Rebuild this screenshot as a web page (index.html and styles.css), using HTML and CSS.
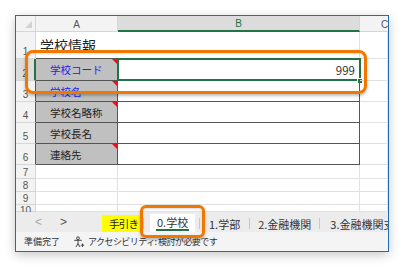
FILE: index.html
```html
<!DOCTYPE html>
<html lang="ja">
<head>
<meta charset="utf-8">
<link rel="stylesheet" href="styles.css">
</head>
<body>
<div class="page">
  <div class="frame">
    <div class="sheet">
      <div class="corner"><span class="corner-tri"></span></div>
      <div class="colhead">A</div>
      <div class="colhead sel">B</div>
      <div class="colhead colc">C</div>

      <div class="rowhead">1</div>
      <div class="cell a title edge-b">学校情報</div>
      <div class="cell edge-b"></div>
      <div class="cell"></div>

      <div class="rowhead rsel">2</div>
      <div class="cell a label blue"><span class="cm"></span>学校コード</div>
      <div class="cell b num"><span class="selbox"></span><span class="handle"></span>999</div>
      <div class="cell"></div>

      <div class="rowhead dark">3</div>
      <div class="cell a label blue"><span class="cm"></span>学校名</div>
      <div class="cell b"></div>
      <div class="cell"></div>

      <div class="rowhead dark">4</div>
      <div class="cell a label"><span class="cm"></span>学校名略称</div>
      <div class="cell b"></div>
      <div class="cell"></div>

      <div class="rowhead dark">5</div>
      <div class="cell a label">学校長名</div>
      <div class="cell b"></div>
      <div class="cell"></div>

      <div class="rowhead dark">6</div>
      <div class="cell a label"><span class="cm"></span>連絡先</div>
      <div class="cell b"></div>
      <div class="cell"></div>

      <div class="rowhead small">7</div>
      <div class="cell"></div>
      <div class="cell"></div>
      <div class="cell"></div>

      <div class="rowhead small">8</div>
      <div class="cell"></div>
      <div class="cell"></div>
      <div class="cell"></div>

      <div class="rowhead small">9</div>
      <div class="cell"></div>
      <div class="cell"></div>
      <div class="cell"></div>

      <div class="rowhead small cut">10</div>
      <div class="cell"></div>
      <div class="cell"></div>
      <div class="cell"></div>
    </div>

    <div class="tabbar">
      <div class="nav"><span class="arrow dim">&lt;</span><span class="arrow">&gt;</span></div>
      <div class="tab guide">手引き</div>
      <div class="sep first"></div>
      <div class="tab active"><span class="tab-text">0.学校</span></div>
      <div class="sep"></div>
      <div class="tab">1.学部</div>
      <div class="sep"></div>
      <div class="tab t2">2.金融機関</div>
      <div class="sep"></div>
      <div class="tab t3">3.金融機関支</div>
    </div>

    <div class="status">
      <span class="ready">準備完了</span>
      <svg class="acc" width="12" height="12" viewBox="0 0 12 12">
        <circle cx="5" cy="2.2" r="1.4" fill="none" stroke="#444" stroke-width="1"/>
        <path d="M1.2 4.3 L8.8 4.3 M5 4.3 L5 7.5 M5 7.5 L3 11 M5 7.5 L7 11" fill="none" stroke="#444" stroke-width="1"/>
        <path d="M9.5 7.5 L9.5 11 M7.8 9.2 L11.2 9.2" fill="none" stroke="#444" stroke-width="1"/>
      </svg>
      <span class="acc-text">アクセシビリティ: 検討が必要です</span>
    </div>
  </div>

  <div class="hl hl-row"></div>
  <div class="hl hl-tab"></div>
</div>
</body>
</html>
```

FILE: styles.css
```css
* { box-sizing: border-box; }

html, body {
  margin: 0;
  padding: 0;
  background: #ffffff;
}

body {
  font-family: "Noto Sans CJK JP", "Liberation Sans", sans-serif;
  color: #222;
}

.page {
  position: relative;
  width: 404px;
  height: 268px;
  padding: 15px 0 0 15px;
}

.frame {
  width: 374px;
  height: 237px;
  border: 1px solid #1f6cb6;
  box-shadow: 0 3px 10px rgba(0, 0, 0, 0.22);
  display: flex;
  flex-direction: column;
  overflow: hidden;
  background: #fff;
}

.sheet {
  display: grid;
  grid-template-columns: 20px 82px 242px 28px;
  grid-template-rows: 16px 27px 22px 21px 21px 21px 21px 14px 13px 13px 7px;
  flex: none;
}

.corner {
  position: relative;
  background: #f3f3f3;
  border-right: 1px solid #d6d6d6;
  border-bottom: 1px solid #d6d6d6;
}

.corner-tri {
  position: absolute;
  right: 3px;
  bottom: 3px;
  width: 0;
  height: 0;
  border-left: 7px solid transparent;
  border-bottom: 7px solid #d2d2d2;
}

.colhead {
  background: #f3f3f3;
  border-right: 1px solid #d6d6d6;
  border-bottom: 1px solid #d6d6d6;
  font-family: "Liberation Sans", sans-serif;
  font-size: 10px;
  color: #555;
  display: flex;
  align-items: flex-end;
  justify-content: center;
  padding-bottom: 1px;
}

.colhead.sel {
  background: #dcdcdc;
  color: #217346;
  border-bottom: 2px solid #217346;
}

.colhead.colc {
  justify-content: flex-start;
  padding-left: 21px;
  border-right: none;
}

.rowhead {
  background: #f3f3f3;
  border-right: 1px solid #d6d6d6;
  border-bottom: 1px solid #d6d6d6;
  font-family: "Liberation Sans", sans-serif;
  font-size: 10px;
  color: #555;
  display: flex;
  align-items: flex-end;
  justify-content: center;
  padding-bottom: 1px;
  line-height: 11px;
}

.rowhead.dark { border-right: 1px solid #555; }

.rowhead.rsel {
  background: #dcdcdc;
  color: #217346;
  border-right: 2px solid #217346;
}

.rowhead.small { padding-bottom: 0; }
.rowhead.cut { align-items: flex-start; }

.cell {
  position: relative;
  border-right: 1px solid #e1e1e1;
  border-bottom: 1px solid #e1e1e1;
  display: flex;
  align-items: center;
  white-space: nowrap;
}

.cell.edge-b { border-bottom: 1px solid #555; }

.cell.title {
  font-size: 14px;
  padding-left: 4px;
  color: #222;
  border-right: none;
  overflow: visible;
}

.cell.a.label {
  background: #c0c0c0;
  border-right: 1px solid #555;
  border-bottom: 1px solid #555;
  font-size: 10.5px;
  padding-left: 14px;
  color: #222;
}

.cell.blue { color: #2222ee !important; }

.cell.b {
  border-right: 1px solid #555;
  border-bottom: 1px solid #555;
}

.cell.num {
  justify-content: flex-end;
  padding-right: 4px;
  font-size: 11.5px;
  color: #333;
}

.cm {
  position: absolute;
  top: 0;
  right: 0;
  width: 0;
  height: 0;
  border-left: 5px solid transparent;
  border-top: 5px solid #e8101a;
}

.selbox {
  position: absolute;
  left: -1px;
  top: -1px;
  right: -2px;
  bottom: -1px;
  border: 2px solid #217346;
}

.handle {
  position: absolute;
  right: -4px;
  bottom: -4px;
  width: 6px;
  height: 6px;
  background: #217346;
  border: 1px solid #fff;
}

.tabbar {
  height: 20px;
  background: #ececec;
  display: flex;
  align-items: flex-end;
  font-size: 11px;
  color: #333;
  white-space: nowrap;
  flex: none;
}

.nav {
  width: 86px;
  height: 20px;
  flex: none;
  display: flex;
  align-items: center;
  padding-left: 19px;
  gap: 18px;
  font-family: "Liberation Sans", sans-serif;
  font-size: 12px;
  color: #555;
}

.arrow.dim { color: #aaa; }

.tab {
  height: 17px;
  flex: none;
  display: flex;
  align-items: center;
  padding: 0 9px;
}

.tab.guide {
  width: 40px;
  background: #ffff00;
  padding: 0 0 0 7px;
  font-size: 10.5px;
  letter-spacing: -0.8px;
  color: #222;
}

.sep {
  width: 1px;
  height: 11px;
  flex: none;
  background: #c8c8c8;
  align-self: center;
  margin-top: 3px;
}

.sep.first { margin-left: 1px; }

.tab.active {
  width: 45px;
  background: #fff;
  margin: 0 4px 0 6px;
  padding: 0 0 0 6px;
  height: 18px;
}

.tab.t2 { padding: 0 8px; }
.tab.t3 { padding: 0 9px 0 10px; }

.tab-text {
  border-bottom: 2px solid #217346;
  line-height: 13px;
  padding: 0 1px;
}

.status {
  flex: 1;
  background: #f4f4f4;
  display: flex;
  align-items: center;
  font-size: 9px;
  color: #333;
  padding-left: 8px;
  white-space: nowrap;
}

.ready { width: 49px; flex: none; }

.acc { margin-right: 3px; flex: none; }

.acc-text {
  letter-spacing: -0.55px;
}

.hl {
  position: absolute;
  border: 3px solid #f07800;
  border-radius: 8px;
  box-shadow: 0 2px 3px rgba(0, 0, 0, 0.25), inset 0 1px 2px rgba(0, 0, 0, 0.15);
}

.hl-row {
  left: 25px;
  top: 50px;
  width: 342px;
  height: 44px;
}

.hl-tab {
  left: 140px;
  top: 205px;
  width: 65px;
  height: 33px;
  border-radius: 6px;
}
```
